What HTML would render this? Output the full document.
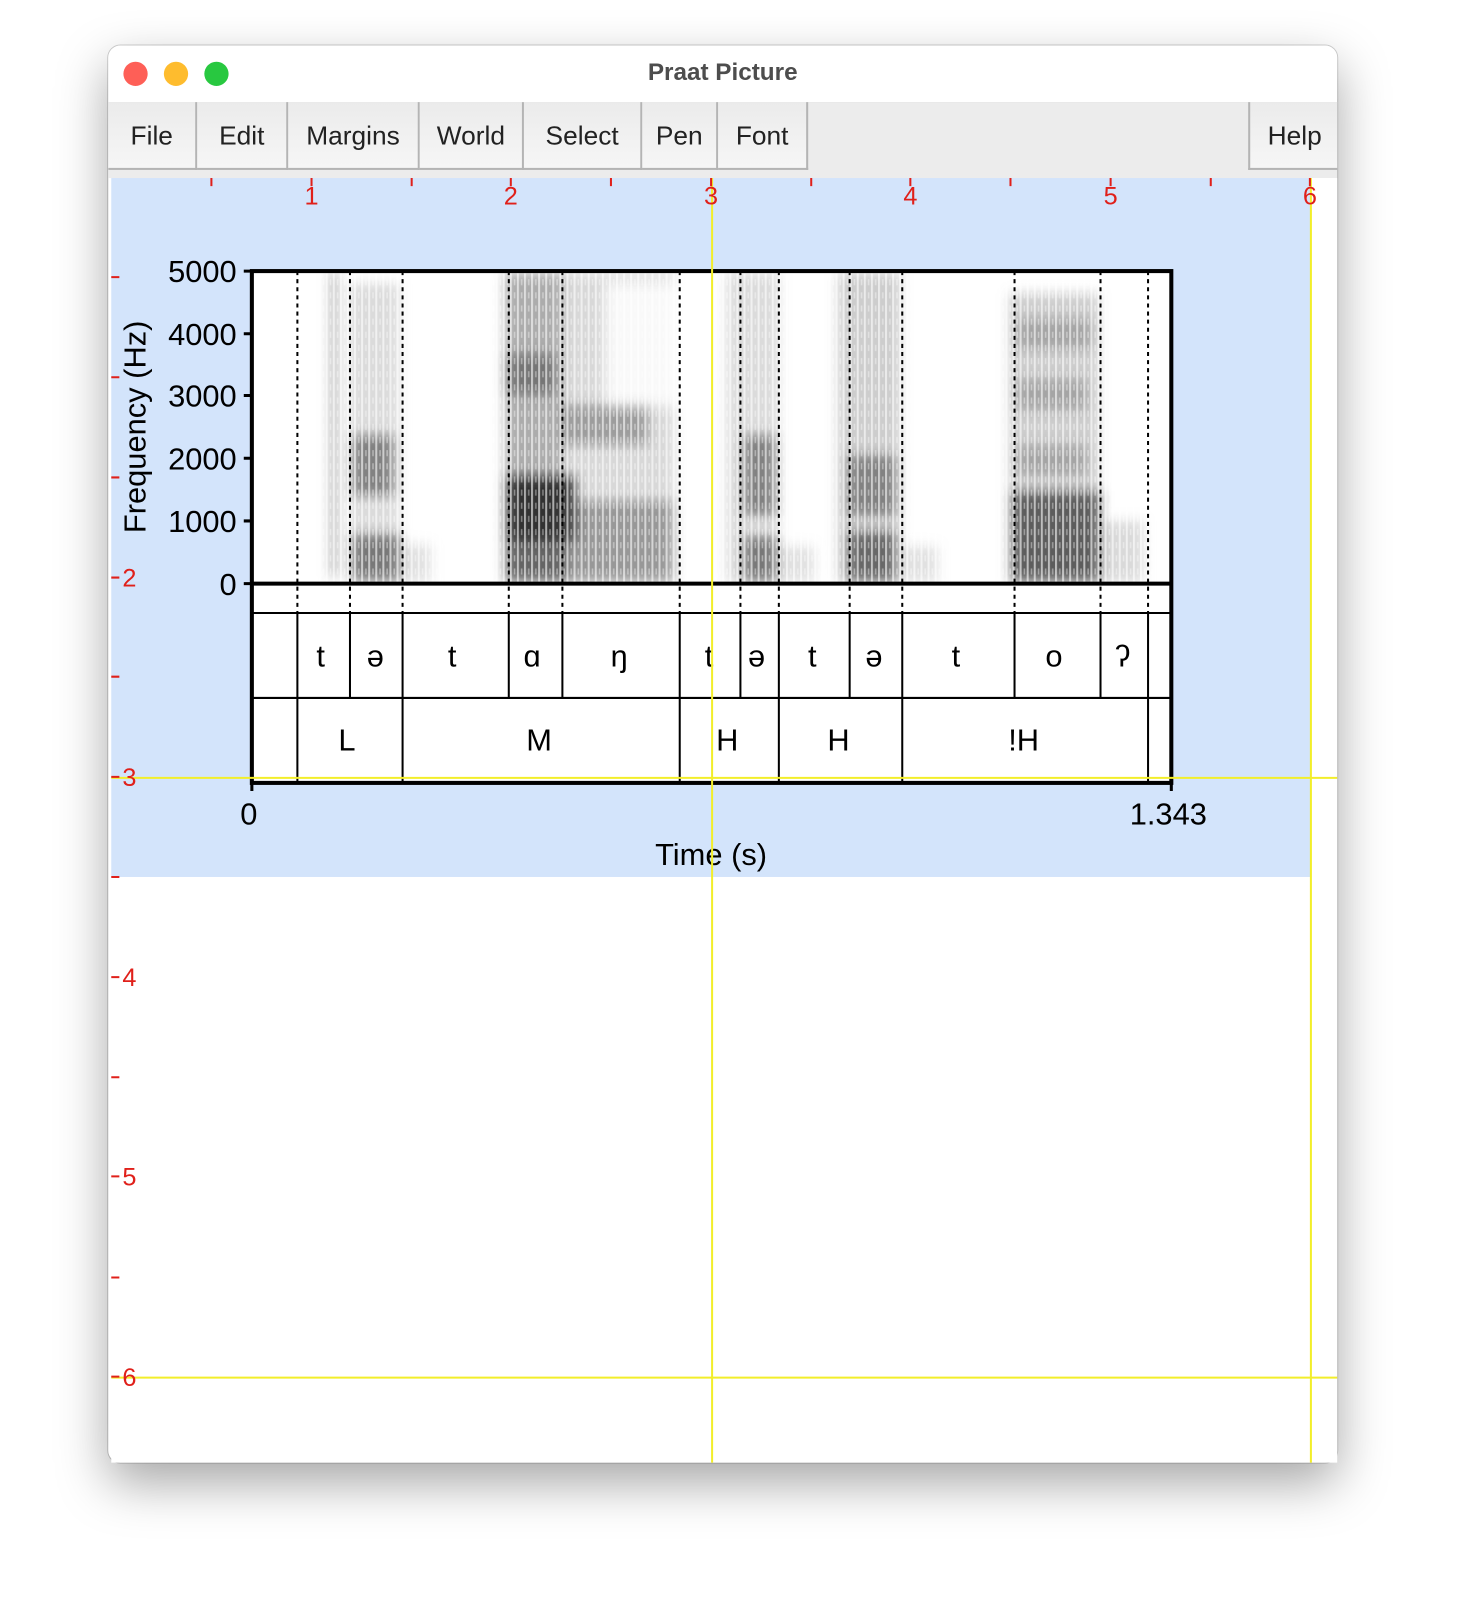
<!DOCTYPE html>
<html><head><meta charset="utf-8"><style>
body{margin:0;width:1476px;height:1586px;background:#fff;position:relative;overflow:hidden;font-family:"Liberation Sans",sans-serif}
#wrap{position:absolute;left:0;top:0;width:1476px;height:1586px;transform:scale(1.0115);transform-origin:0 0}
.win{position:absolute;left:107px;top:45px;width:1215px;height:1401px;border-radius:12px;background:#fff;box-shadow:0 20px 50px rgba(0,0,0,.35),0 0 0 1px rgba(0,0,0,.18);overflow:hidden}
.title{position:absolute;left:0;top:0;width:100%;height:56px;background:#fff;border-bottom:1px solid #c8c8c8;text-align:center;line-height:54px;font-weight:bold;font-size:24px;color:#4d4d4d}
.dot{position:absolute;top:16px;width:24px;height:24px;border-radius:50%}
.menu{position:absolute;left:0;top:56px;width:100%;height:75px;background:#ececec}
.btn{position:absolute;top:0;height:65px;line-height:66px;text-align:center;font-size:26px;color:#222;border-right:2px solid #b4b4b4;border-bottom:2px solid #b4b4b4;background:linear-gradient(#ebebeb,#f6f6f6)}
</style></head><body>
<div id="wrap">
<div class="win">
<div class="title">Praat Picture
<div class="dot" style="left:15px;background:#fe5f57"></div>
<div class="dot" style="left:55px;background:#febc2e"></div>
<div class="dot" style="left:95px;background:#28c840"></div>
</div>
<div class="menu">
<div class="btn" style="left:0;width:86px">File</div>
<div class="btn" style="left:88px;width:88px">Edit</div>
<div class="btn" style="left:178px;width:128px">Margins</div>
<div class="btn" style="left:308px;width:101px">World</div>
<div class="btn" style="left:411px;width:115px">Select</div>
<div class="btn" style="left:528px;width:73px">Pen</div>
<div class="btn" style="left:603px;width:87px">Font</div>
<div class="btn" style="left:1127px;width:88px;border-left:2px solid #b4b4b4;border-right:none">Help</div>
</div>
</div>
<svg width="1476" height="1586" style="position:absolute;left:0;top:0" font-family="Liberation Sans, sans-serif">
<defs>
<filter id="bl" x="-20%" y="-20%" width="140%" height="140%"><feGaussianBlur stdDeviation="6"/></filter>
<pattern id="st" width="7" height="13" patternUnits="userSpaceOnUse"><rect x="0" y="0" width="2" height="13" fill="#fff" opacity=".6"/><rect x="4" y="3" width="1.5" height="6" fill="#fff" opacity=".4"/></pattern>
<clipPath id="sc"><rect x="250" y="270" width="907" height="306"/></clipPath>
</defs>
<rect x="110" y="176" width="1212" height="1270" fill="#fff"/>
<rect x="110" y="176" width="1186" height="691" fill="#d3e4fb"/>
<rect x="249" y="268" width="909" height="506" fill="#fff"/>
<g clip-path="url(#sc)">
<g filter="url(#bl)">
<rect x="327" y="270" width="6" height="300" fill="#555" opacity=".6"/>
<rect x="345" y="280" width="50" height="290" fill="#999" opacity=".35"/>
<rect x="348" y="430" width="42" height="60" fill="#444" opacity=".6"/>
<rect x="348" y="528" width="48" height="47" fill="#444" opacity=".65"/>
<rect x="398" y="538" width="28" height="37" fill="#aaa" opacity=".35"/>
<rect x="497" y="270" width="170" height="305" fill="#999" opacity=".38"/>
<rect x="500" y="270" width="56" height="305" fill="#777" opacity=".45"/>
<rect x="500" y="470" width="70" height="65" fill="#111" opacity=".8"/>
<rect x="500" y="535" width="60" height="40" fill="#333" opacity=".6"/>
<rect x="500" y="350" width="50" height="40" fill="#444" opacity=".5"/>
<rect x="556" y="400" width="85" height="40" fill="#555" opacity=".45"/>
<rect x="556" y="495" width="110" height="80" fill="#555" opacity=".5"/>
<rect x="600" y="280" width="80" height="120" fill="#fff" opacity=".85"/>
<rect x="718" y="270" width="52" height="305" fill="#999" opacity=".35"/>
<rect x="735" y="430" width="32" height="80" fill="#444" opacity=".6"/>
<rect x="735" y="530" width="33" height="45" fill="#444" opacity=".65"/>
<rect x="770" y="540" width="35" height="35" fill="#aaa" opacity=".35"/>
<rect x="828" y="270" width="62" height="305" fill="#888" opacity=".42"/>
<rect x="838" y="450" width="48" height="60" fill="#444" opacity=".55"/>
<rect x="838" y="525" width="48" height="50" fill="#333" opacity=".65"/>
<rect x="892" y="540" width="35" height="35" fill="#aaa" opacity=".35"/>
<rect x="998" y="290" width="88" height="285" fill="#888" opacity=".42"/>
<rect x="1005" y="315" width="75" height="30" fill="#666" opacity=".4"/>
<rect x="1005" y="375" width="70" height="30" fill="#666" opacity=".4"/>
<rect x="1005" y="440" width="70" height="30" fill="#666" opacity=".4"/>
<rect x="1000" y="485" width="88" height="90" fill="#222" opacity=".65"/>
<rect x="1088" y="515" width="42" height="60" fill="#aaa" opacity=".45"/>
</g>
<rect x="250" y="270" width="907" height="306" fill="url(#st)"/>
</g>
<g stroke="#000" stroke-width="2" stroke-dasharray="4,4">
<path d="M294 268V606M346 268V606M398 268V606M503 268V606M556 268V606M672 268V606M732 268V606M770 268V606M840 268V606M892 268V606M1003 268V606M1088 268V606M1135 268V606"/>
</g>
<g stroke="#000" stroke-width="2" fill="none">
<path d="M249 606H1158M249 690H1158"/>
<path d="M294 606V774M346 606V690M398 606V774M503 606V690M556 606V690M672 606V774M732 606V690M770 606V774M840 606V690M892 606V774M1003 606V690M1088 606V690M1135 606V774"/>
</g>
<rect x="249" y="268" width="909" height="506" fill="none" stroke="#000" stroke-width="4"/>
<path d="M249 577H1158" stroke="#000" stroke-width="4"/>
<path d="M241 268H249M241 330H249M241 391H249M241 453H249M241 515H249M241 577H249M249 774V782M1158 774V782" stroke="#000" stroke-width="3"/>
<g font-size="30.5" fill="#000" text-anchor="end">
<text x="234" y="279">5000</text><text x="234" y="341">4000</text><text x="234" y="402">3000</text>
<text x="234" y="464">2000</text><text x="234" y="526">1000</text><text x="234" y="588">0</text>
</g>
<text transform="translate(144,422) rotate(-90)" font-size="30.5" text-anchor="middle">Frequency (Hz)</text>
<g font-size="30.5" text-anchor="middle">
<text x="246" y="815">0</text><text x="1155" y="815">1.343</text>
<text x="703" y="855">Time (s)</text>
<text x="317" y="659">t</text><text x="371" y="659">ə</text><text x="447" y="659">t</text><text x="526" y="659">ɑ</text>
<text x="612" y="659">ŋ</text><text x="701" y="659">t</text><text x="748" y="659">ə</text><text x="803" y="659">t</text>
<text x="864" y="659">ə</text><text x="945" y="659">t</text><text x="1042" y="659">o</text><text x="1110" y="659">ʔ</text>
<text x="343" y="742">L</text><text x="533" y="742">M</text><text x="719" y="742">H</text><text x="829" y="742">H</text><text x="1012" y="742">!H</text>
</g>
<g stroke="#f2ee2a" stroke-width="2">
<path d="M704 176V1446M1296 176V1446M110 769H1322M110 1362H1322"/>
</g>
<g stroke="#e0201a" stroke-width="2">
<path d="M209 176v8M308 176v8M407 176v8M505 176v8M604 176v8M703 176v8M802 176v8M900 176v8M999 176v8M1098 176v8M1197 176v8M1295 176v8"/>
<path d="M110 274h8M110 373h8M110 472h8M110 571h8M110 669h8M110 768h8M110 867h8M110 966h8M110 1065h8M110 1163h8M110 1263h8M110 1361h8"/>
</g>
<g fill="#e0201a" font-size="25" text-anchor="middle">
<text x="308" y="202">1</text><text x="505" y="202">2</text><text x="703" y="202">3</text><text x="900" y="202">4</text><text x="1098" y="202">5</text><text x="1295" y="202">6</text>
</g>
<g fill="#e0201a" font-size="25">
<text x="121" y="580">2</text><text x="121" y="777">3</text><text x="121" y="975">4</text><text x="121" y="1172">5</text><text x="121" y="1370">6</text>
</g>
</svg>
</div>
</body></html>
